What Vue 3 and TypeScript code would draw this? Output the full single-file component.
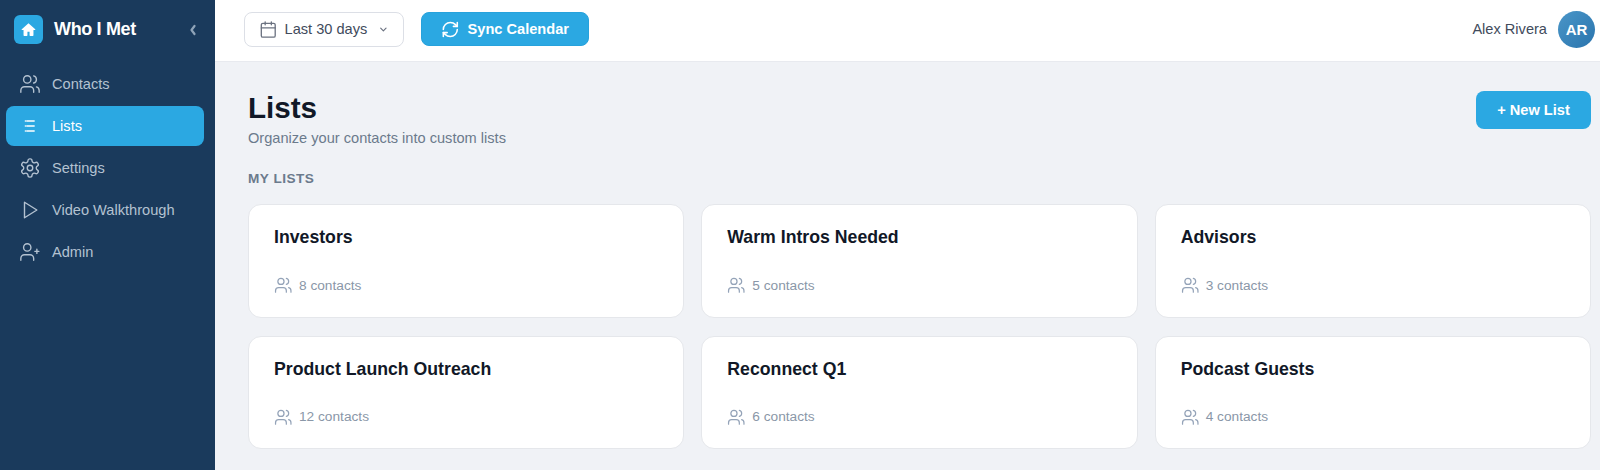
<script setup lang="ts">
// Lists page: dark sidebar, top bar with date filter, grid of list cards.
const navItems = [
  { label: 'Contacts', icon: 'users' },
  { label: 'Lists', icon: 'list', active: true },
  { label: 'Settings', icon: 'gear' },
  { label: 'Video Walkthrough', icon: 'play' },
  { label: 'Admin', icon: 'admin' },
]

const lists = [
  { name: 'Investors', count: 8 },
  { name: 'Warm Intros Needed', count: 5 },
  { name: 'Advisors', count: 3 },
  { name: 'Product Launch Outreach', count: 12 },
  { name: 'Reconnect Q1', count: 6 },
  { name: 'Podcast Guests', count: 4 },
]
</script>

<template>
  <div class="app">
    <aside class="sidebar">
      <div class="brand">
        <span class="logo">
          <svg viewBox="0 0 24 24" width="17" height="17" fill="#fff">
            <path d="M12 3 2.500 11.600c-.4.4-.1 1 .4 1H5V20c0 .6.4 1 1 1h3.500c.6 0 1-.4 1-1v-5h3v5c0 .6.4 1 1 1H18c.6 0 1-.4 1-1v-7.400h2.100c.5 0 .8-.6.4-1z" />
          </svg>
        </span>
        <span class="brand-name">Who I Met</span>
        <svg class="collapse" viewBox="0 0 10 14" width="10" height="14" fill="none" stroke="#8fa3b8" stroke-width="2.200" stroke-linecap="round" stroke-linejoin="round">
          <path d="M6.500 3 3.500 7l3 4" />
        </svg>
      </div>
      <nav class="nav">
        <a v-for="item in navItems" :key="item.label" class="nav-item" :class="{ active: item.active }">
          <svg class="nav-icon" viewBox="0 0 24 24" width="22" height="22" fill="none" stroke="currentColor" stroke-width="1.500" stroke-linecap="round" stroke-linejoin="round">
            <template v-if="item.icon === 'users'">
              <path d="M16 21v-2a4 4 0 0 0-4-4H6a4 4 0 0 0-4 4v2" />
              <circle cx="9" cy="7" r="4" />
              <path d="M22 21v-2a4 4 0 0 0-3-3.870" />
              <path d="M16 3.130a4 4 0 0 1 0 7.750" />
            </template>
            <template v-else-if="item.icon === 'list'">
              <path d="M8.500 6.500h8M8.500 12h8M8.500 17.500h8" stroke-width="1.700" />
              <path d="M7 6.500h.01M7 12h.01M7 17.500h.01" stroke-width="1.700" />
            </template>
            <template v-else-if="item.icon === 'gear'">
              <path d="M12.220 2h-.44a2 2 0 0 0-2 2v.18a2 2 0 0 1-1 1.730l-.43.25a2 2 0 0 1-2 0l-.15-.08a2 2 0 0 0-2.730.73l-.22.38a2 2 0 0 0 .73 2.730l.15.1a2 2 0 0 1 1 1.720v.51a2 2 0 0 1-1 1.740l-.15.09a2 2 0 0 0-.73 2.730l.22.38a2 2 0 0 0 2.730.73l.15-.08a2 2 0 0 1 2 0l.43.25a2 2 0 0 1 1 1.730V20a2 2 0 0 0 2 2h.44a2 2 0 0 0 2-2v-.18a2 2 0 0 1 1-1.730l.43-.25a2 2 0 0 1 2 0l.15.08a2 2 0 0 0 2.730-.73l.22-.39a2 2 0 0 0-.73-2.730l-.15-.08a2 2 0 0 1-1-1.740v-.5a2 2 0 0 1 1-1.740l.15-.09a2 2 0 0 0 .73-2.730l-.22-.38a2 2 0 0 0-2.730-.73l-.15.08a2 2 0 0 1-2 0l-.43-.25a2 2 0 0 1-1-1.730V4a2 2 0 0 0-2-2z" />
              <circle cx="12" cy="12" r="3" />
            </template>
            <template v-else-if="item.icon === 'play'">
              <path d="M6 3.500 19.500 12 6 20.500z" />
            </template>
            <template v-else>
              <path d="M16 21v-2a4 4 0 0 0-4-4H6a4 4 0 0 0-4 4v2" />
              <circle cx="9" cy="7" r="4" />
              <path d="M19.500 9v4.500M17.250 11.250h4.500" />
            </template>
          </svg>
          <span>{{ item.label }}</span>
        </a>
      </nav>
    </aside>

    <div class="content">
      <header class="topbar">
        <button class="date-btn">
          <svg viewBox="0 0 24 24" width="19" height="19" fill="none" stroke="#6b7280" stroke-width="1.700" stroke-linecap="round" stroke-linejoin="round">
            <rect x="3" y="4" width="18" height="18" rx="2" />
            <path d="M16 2v4M8 2v4M3 10h18" />
          </svg>
          <span>Last 30 days</span>
          <svg class="chev" viewBox="0 0 12 12" width="11" height="11" fill="none" stroke="#6b7280" stroke-width="1.300" stroke-linecap="round" stroke-linejoin="round">
            <path d="m3 4.500 3 3 3-3" />
          </svg>
        </button>
        <button class="sync-btn">
          <svg viewBox="0 0 24 24" width="19" height="19" fill="none" stroke="#fff" stroke-width="2" stroke-linecap="round" stroke-linejoin="round">
            <path d="M3 12a9 9 0 0 1 9-9 9.750 9.750 0 0 1 6.740 2.740L21 8" />
            <path d="M21 3v5h-5" />
            <path d="M21 12a9 9 0 0 1-9 9 9.750 9.750 0 0 1-6.740-2.740L3 16" />
            <path d="M8 16H3v5" />
          </svg>
          <span>Sync Calendar</span>
        </button>
        <div class="user">
          <span class="user-name">Alex Rivera</span>
          <span class="avatar">AR</span>
        </div>
      </header>

      <main class="main">
        <div class="page-head">
          <div>
            <h1>Lists</h1>
            <p class="subtitle">Organize your contacts into custom lists</p>
          </div>
          <button class="new-btn">+ New List</button>
        </div>
        <h2 class="section">MY LISTS</h2>
        <div class="grid">
          <div v-for="list in lists" :key="list.name" class="card">
            <h3>{{ list.name }}</h3>
            <div class="count">
              <svg viewBox="0 0 24 24" width="18.500" height="18.500" fill="none" stroke="#94a3b8" stroke-width="1.600" stroke-linecap="round" stroke-linejoin="round">
                <path d="M16 21v-2a4 4 0 0 0-4-4H6a4 4 0 0 0-4 4v2" />
                <circle cx="9" cy="7" r="4" />
                <path d="M22 21v-2a4 4 0 0 0-3-3.870" />
                <path d="M16 3.130a4 4 0 0 1 0 7.750" />
              </svg>
              <span>{{ list.count }} contacts</span>
            </div>
          </div>
        </div>
      </main>
    </div>
  </div>
</template>

<style>
html, body { margin: 0; overflow: hidden; }
</style>

<style scoped>
.app {
  display: flex;
  width: 1600px;
  height: 470px;
  overflow: hidden;
  font-family: "Liberation Sans", Arial, sans-serif;
  background: #f0f2f6;
}
.sidebar {
  flex: 0 0 215px;
  background: #1a3a5c;
  box-sizing: border-box;
  padding: 14px 11px 0 6px;
}
.brand {
  display: flex;
  align-items: center;
  height: 30px;
  padding-left: 8px;
  margin-bottom: 20px;
}
.logo {
  width: 29px;
  height: 29px;
  border-radius: 6px;
  background: #2ba8e2;
  display: flex;
  align-items: center;
  justify-content: center;
}
.brand-name {
  margin-left: 11px;
  color: #fff;
  font-size: 18px;
  letter-spacing: -.35px;
  font-weight: 700;
}
.collapse { margin-left: auto; margin-right: 6px; margin-top: 2px; }
.nav { display: flex; flex-direction: column; gap: 2px; }
.nav-item {
  display: flex;
  align-items: center;
  height: 40px;
  border-radius: 8px;
  padding-left: 13px;
  gap: 11px;
  color: #b4c2d1;
  font-size: 14.6px;
}
.nav-item.active { background: #2ba8e2; color: #fff; }
.content { flex: 1; min-width: 0; display: flex; flex-direction: column; }
.topbar {
  display: flex;
  align-items: center;
  height: 62px;
  box-sizing: border-box;
  padding: 0 5px 3px 29px;
  background: #fff;
  border-bottom: 1px solid #e8eaef;
}
button { font-family: inherit; cursor: pointer; white-space: nowrap; }
.date-btn {
  display: flex;
  align-items: center;
  width: 160px;
  height: 35px;
  box-sizing: border-box;
  padding: 0 14px 0 14px;
  gap: 7px;
  background: #fff;
  border: 1px solid #dcdfe6;
  border-radius: 8px;
  color: #414b5c;
  font-size: 14.6px;
}
.chev { margin-left: 4px; }
.sync-btn {
  display: flex;
  align-items: center;
  margin-left: 17px;
  width: 168px;
  height: 34px;
  box-sizing: border-box;
  padding: 0 19px;
  gap: 8px;
  background: #2ba8e2;
  border: 1px solid #27a2dc;
  border-radius: 8px;
  color: #fff;
  font-size: 14.6px;
  font-weight: 700;
}
.user { margin-left: auto; display: flex; align-items: center; gap: 11px; }
.user-name { color: #414b5c; font-size: 14.6px; }
.avatar {
  width: 37px;
  height: 37px;
  border-radius: 50%;
  background: linear-gradient(135deg, #4a96c8, #2a74ad);
  color: #fff;
  font-size: 15px;
  font-weight: 700;
  display: flex;
  align-items: center;
  justify-content: center;
}
.main { padding: 29px 9px 0 33px; }
.page-head { display: flex; justify-content: space-between; align-items: flex-start; }
h1 {
  margin: 0;
  color: #111827;
  font-size: 29.600px;
  line-height: 34px;
  font-weight: 700;
}
.subtitle { margin: 4px 0 0; color: #6b7a8c; font-size: 14.6px; line-height: 18px; }
.new-btn {
  width: 115px;
  height: 38px;
  background: #2ba8e2;
  border: 0;
  border-radius: 8px;
  color: #fff;
  font-size: 14.6px;
  font-weight: 700;
}
.section {
  margin: 23px 0 0;
  color: #6b7a8c;
  font-size: 13.6px;
  line-height: 18px;
  font-weight: 700;
  letter-spacing: .5px;
}
.grid {
  display: grid;
  grid-template-columns: repeat(3, 1fr);
  gap: 18px 17px;
  margin-top: 16px;
}
.card {
  height: 113.500px;
  box-sizing: border-box;
  background: #fff;
  border: 1px solid #e5e7eb;
  border-radius: 13px;
  padding: 21px 25px 0;
}
h3 {
  margin: 0;
  color: #111827;
  font-size: 17.700px;
  line-height: 22px;
  font-weight: 700;
}
.count {
  display: flex;
  align-items: center;
  gap: 6.500px;
  margin-top: 28px;
  color: #8a97a8;
  font-size: 13.700px;
}
</style>
